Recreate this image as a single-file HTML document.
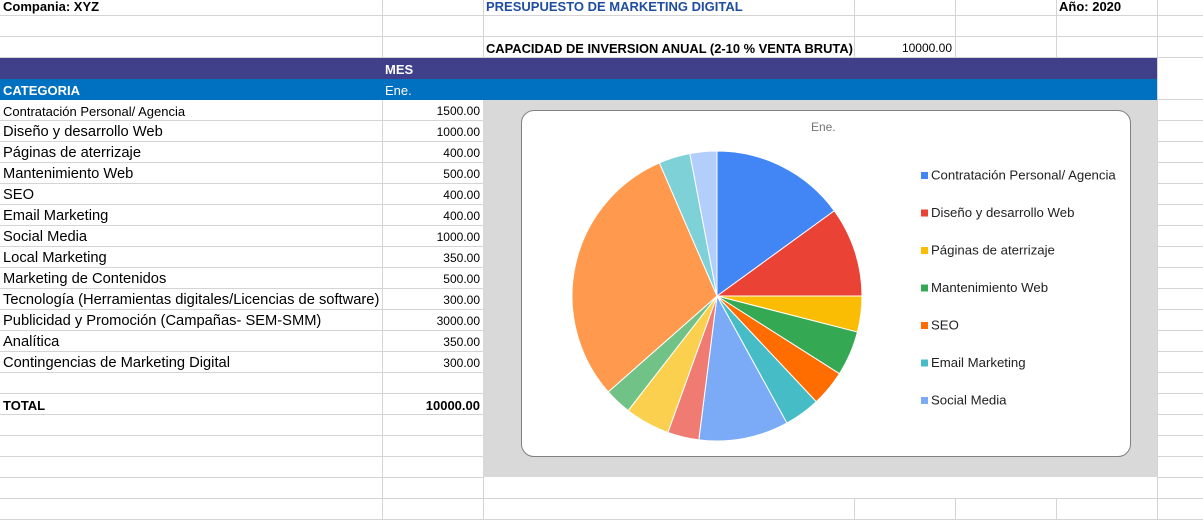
<!DOCTYPE html>
<html><head><meta charset="utf-8"><style>
body{margin:0;width:1203px;height:520px;overflow:hidden;background:#fff;font-family:"Liberation Sans",Arial,sans-serif;position:relative}
.h{position:absolute;left:0;width:1203px;height:1px;background:#d4d4d4}
.v{position:absolute;width:1px;background:#d4d4d4}
.t{position:absolute;font-size:14px;color:#000;white-space:nowrap;line-height:21px}
.r{text-align:right}
.b{font-weight:bold}
</style></head><body>
<div id="grid"></div>
<div style="position:absolute;left:0;top:58px;width:1157px;height:21px;background:#3f3f8a"></div>
<div style="position:absolute;left:0;top:79px;width:1157px;height:21px;background:#0070c0"></div>
<div style="position:absolute;left:483px;top:100px;width:674px;height:377px;background:#d9d9d9"></div>
<div style="position:absolute;left:521px;top:110px;width:608px;height:345px;background:#fff;border:1px solid #808080;border-radius:13px"></div>

<div class="t b" style="left:3px;top:-4px;font-size:13px">Compania: XYZ</div>
<div class="t b" style="left:486px;top:-4px;font-size:13px;color:#1f4ea0">PRESUPUESTO DE MARKETING DIGITAL</div>
<div class="t b" style="left:1059px;top:-4px;font-size:13px">Año: 2020</div>
<div class="t b" style="left:486px;top:38px;font-size:12.9px">CAPACIDAD DE INVERSION ANUAL (2-10 % VENTA BRUTA)</div>
<div class="t r" style="left:855px;width:97px;top:38px;font-size:12px">10000.00</div>
<div class="t b" style="left:385px;top:59px;font-size:13px;color:#fff">MES</div>
<div class="t b" style="left:3px;top:80px;font-size:13px;color:#fff">CATEGORIA</div>
<div class="t" style="left:385px;top:80px;font-size:13px;color:#fff">Ene.</div>
<div id="rows"></div>
<div class="t b" style="left:3px;top:395px;font-size:13px">TOTAL</div>
<div class="t b r" style="left:383px;width:97px;top:395px;font-size:13px">10000.00</div>
<div class="t" style="left:811px;top:117px;font-size:12px;color:#757575">Ene.</div>
<svg id="pie" style="position:absolute;left:0;top:0" width="1203" height="520"></svg>
<script>
var g='';
[15,36,57,99,120,141,162,183,204,225,246,267,288,309,330,351,372,393,414,435,456,477,498,519].forEach(function(y){
 if(y>99&&y<=477){g+='<div class="h" style="top:'+y+'px;width:483px"></div><div class="h" style="top:'+y+'px;left:1157px;width:46px"></div>';}
 else g+='<div class="h" style="top:'+y+'px"></div>';});
[382,483,1157].forEach(function(x){g+='<div class="v" style="top:0;height:520px;left:'+x+'px"></div>';});
[854,955,1056].forEach(function(x){g+='<div class="v" style="top:0;height:57px;left:'+x+'px"></div><div class="v" style="top:498px;height:22px;left:'+x+'px"></div>';});
document.getElementById('grid').innerHTML=g;
var names=["Contratación Personal/ Agencia","Diseño y desarrollo Web","Páginas de aterrizaje","Mantenimiento Web","SEO","Email Marketing","Social Media","Local Marketing","Marketing de Contenidos","Tecnología (Herramientas digitales/Licencias de software)","Publicidad y Promoción (Campañas- SEM-SMM)","Analítica","Contingencias de Marketing Digital"];
var vals=[1500,1000,400,500,400,400,1000,350,500,300,3000,350,300];
var cols=["#4285f4","#ea4335","#fbbc04","#34a853","#ff6d01","#46bdc6","#7baaf7","#f07b72","#fcd04f","#71c287","#ff994d","#7ed1d7","#b3cefb"];
var r='';
names.forEach(function(n,i){var y=100+i*21;
 r+='<div class="t" style="left:3px;top:'+(y+1)+'px;font-size:'+(i==0?13:14.7)+'px">'+n+'</div><div class="t r" style="left:383px;width:97px;top:'+(y+1)+'px;font-size:12px">'+vals[i].toFixed(2)+'</div>';});
document.getElementById('rows').innerHTML=r;
var cx=717,cy=296,R=145,a=0,s='';
vals.forEach(function(v,i){var a2=a+v/10000*2*Math.PI;
 var x1=cx+R*Math.sin(a),y1=cy-R*Math.cos(a),x2=cx+R*Math.sin(a2),y2=cy-R*Math.cos(a2);
 s+='<path d="M'+cx+' '+cy+'L'+x1+' '+y1+'A'+R+' '+R+' 0 '+((a2-a)>Math.PI?1:0)+' 1 '+x2+' '+y2+'Z" fill="'+cols[i]+'" stroke="#fff" stroke-width="1"/>';a=a2;});
for(var i=0;i<7;i++){var y=175+i*37.5;
 s+='<rect x="921" y="'+(y-3)+'" width="7" height="7" fill="'+cols[i]+'"/><text x="931" y="'+(y+4.5)+'" font-family="Liberation Sans,Arial,sans-serif" font-size="13.2" fill="#222">'+names[i]+'</text>';}
document.getElementById('pie').innerHTML=s;
</script>
</body></html>
